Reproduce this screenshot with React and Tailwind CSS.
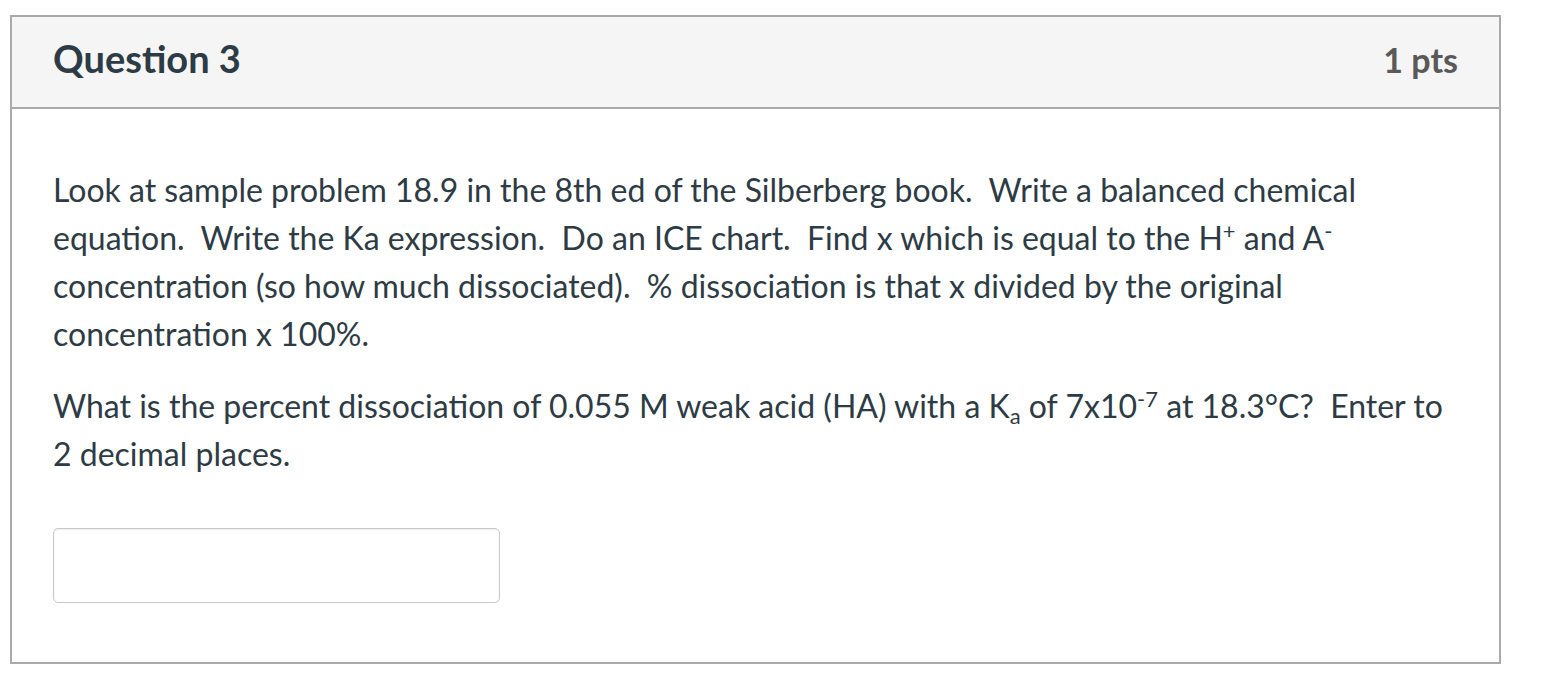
import React from 'react';

const App = () => {
  return (
    <div className="min-h-screen bg-white pt-[15px] pl-[10px]" style={{ fontFamily: 'Lato, "Noto Sans", sans-serif' }}>
      <div className="w-[1491px] h-[649px] border-2 border-[#aaaaaa] bg-white">
        {/* cabecera */}
        <div className="h-[92px] bg-[#f5f5f5] border-b-2 border-[#aaaaaa] flex items-center pl-[41px] pr-[41px] pb-[8px]">
          <div className="flex w-full items-baseline justify-between">
            <h2 className="text-[38px] font-bold text-[#2d3b45] leading-none">Question 3</h2>
            <div className="text-[34px] font-bold text-[#595959] leading-none">1 pts</div>
          </div>
        </div>

        {/* cuerpo */}
        <div className="pl-[41px] pr-[41px] pt-[57px] text-[32px] leading-[48px] text-[#2d3b45]">
          <p>
            Look at sample problem 18.9 in the 8th ed of the Silberberg book.&nbsp; Write a balanced chemical equation.&nbsp; Write the Ka expression.&nbsp; Do an ICE chart.&nbsp; Find x which is equal to the H<sup className="text-[22px] leading-none">+</sup> and A<sup className="text-[22px] leading-none">-</sup> concentration (so how much dissociated).&nbsp; % dissociation is that x divided by the original concentration x 100%.
          </p>
          <p className="mt-[24px]">
            What is the percent dissociation of 0.055 M weak acid (HA) with a K<sub className="text-[22px] leading-none">a</sub> of 7x10<sup className="text-[22px] leading-none">-7</sup> at 18.3°C?&nbsp; Enter to 2 decimal places.
          </p>
          <div className="mt-[50px]">
            <input
              type="text"
              className="w-[447px] h-[75px] border-[1.5px] border-[#c8c8c8] rounded-[5px] bg-white shadow-[inset_0_1px_2px_rgba(0,0,0,0.08)] outline-none px-3"
            />
          </div>
        </div>
      </div>
    </div>
  );
};

export default App;
